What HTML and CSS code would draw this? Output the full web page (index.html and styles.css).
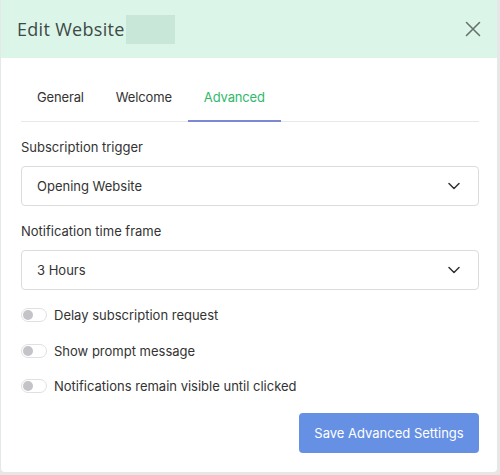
FILE: index.html
```html
<!DOCTYPE html>
<html>
<head>
<meta charset="utf-8">
<link rel="stylesheet" href="styles.css">
</head>
<body>
<div class="modal">
  <div class="modal-header">
    <div class="title-wrap">
      <span class="title">Edit Website</span>
      <span class="redacted"></span>
    </div>
    <button class="close" aria-label="Close">
      <svg width="16" height="16" viewBox="0 0 16 16"><path d="M1.5 1.5 L14.5 14.5 M14.5 1.5 L1.5 14.5" stroke="#66736e" stroke-width="1.6" fill="none" stroke-linecap="round"/></svg>
    </button>
  </div>
  <div class="modal-body">
    <nav class="tabs">
      <span class="tab">General</span>
      <span class="tab">Welcome</span>
      <span class="tab active">Advanced</span>
    </nav>
    <div class="field">
      <label class="label">Subscription trigger</label>
      <div class="select">
        <span>Opening Website</span>
        <svg class="chev" width="12" height="8" viewBox="0 0 12 8"><path d="M1 1.5 L6 6.5 L11 1.5" stroke="#333" stroke-width="1.5" fill="none" stroke-linecap="round" stroke-linejoin="round"/></svg>
      </div>
    </div>
    <div class="field">
      <label class="label">Notification time frame</label>
      <div class="select">
        <span>3 Hours</span>
        <svg class="chev" width="12" height="8" viewBox="0 0 12 8"><path d="M1 1.5 L6 6.5 L11 1.5" stroke="#333" stroke-width="1.5" fill="none" stroke-linecap="round" stroke-linejoin="round"/></svg>
      </div>
    </div>
    <div class="toggles">
      <div class="toggle-row"><span class="switch"><span class="knob"></span></span><span>Delay subscription request</span></div>
      <div class="toggle-row"><span class="switch"><span class="knob"></span></span><span>Show prompt message</span></div>
      <div class="toggle-row"><span class="switch"><span class="knob"></span></span><span>Notifications remain visible until clicked</span></div>
    </div>
    <div class="actions">
      <button class="btn-primary">Save Advanced Settings</button>
    </div>
  </div>
</div>
</body>
</html>
```
FILE: styles.css
```css
* { box-sizing: border-box; }
html, body { margin: 0; padding: 0; }
body {
  background: #e6e8e7;
  font-family: Inter, "Noto Sans", sans-serif;
  color: #333;
  font-size: 13px;
}
.modal {
  width: 496px;
  height: 472px;
  margin-left: 1px;
  background: #fff;
  border-radius: 0 0 4px 4px;
  overflow: hidden;
}
.modal-header {
  height: 58px;
  background: #dcf5e9;
  display: flex;
  align-items: center;
  justify-content: space-between;
  padding: 0 16px 0 16px;
}
.title-wrap { display: flex; align-items: center; }
.title {
  font-family: "Open Sans", sans-serif;
  font-size: 18px;
  color: #3e4a46;
  letter-spacing: 0.3px;
}
.redacted {
  display: inline-block;
  width: 49px;
  height: 29px;
  background: #c9e7d9;
  margin-left: 1px;
}
.close {
  border: 0;
  background: none;
  padding: 0;
  width: 16px;
  height: 16px;
  display: flex;
}
.modal-body {
  padding: 16px 18px 0 20px;
}
.tabs {
  display: flex;
  border-bottom: 1px solid #e8e8e8;
}
.tab {
  padding: 13px 16px;
  line-height: 20px;
  color: #333;
  border-bottom: 2px solid transparent;
  margin-bottom: -1px;
  letter-spacing: -0.15px;
}
.tab.active {
  color: #2fb96c;
  border-bottom-color: #7d88d3;
}
.field { margin-top: 15px; }
.label {
  display: block;
  line-height: 20px;
  color: #333;
  margin-bottom: 9px;
}
.select {
  height: 40px;
  border: 1px solid #dcdcdc;
  border-radius: 4px;
  display: flex;
  align-items: center;
  justify-content: space-between;
  padding: 0 18px 0 15px;
  color: #333;
}
.chev { display: block; }
.toggles {
  margin-top: 15px;
  display: flex;
  flex-direction: column;
  gap: 15.5px;
}
.toggle-row {
  display: flex;
  align-items: center;
  gap: 7px;
  line-height: 20px;
}
.switch {
  width: 26px;
  height: 14px;
  border: 1px solid #e0e0e0;
  border-radius: 7px;
  background: #fff;
  display: flex;
  align-items: center;
  padding-left: 1px;
}
.knob {
  width: 10px;
  height: 10px;
  border-radius: 50%;
  background: #c3c3c8;
}
.actions {
  display: flex;
  justify-content: flex-end;
  margin-top: 17px;
}
.btn-primary {
  width: 180px;
  height: 40px;
  border: 0;
  border-radius: 4px;
  background: #6590e4;
  color: #fff;
  font-family: Inter, "Noto Sans", sans-serif;
  font-size: 13px;
}
```
